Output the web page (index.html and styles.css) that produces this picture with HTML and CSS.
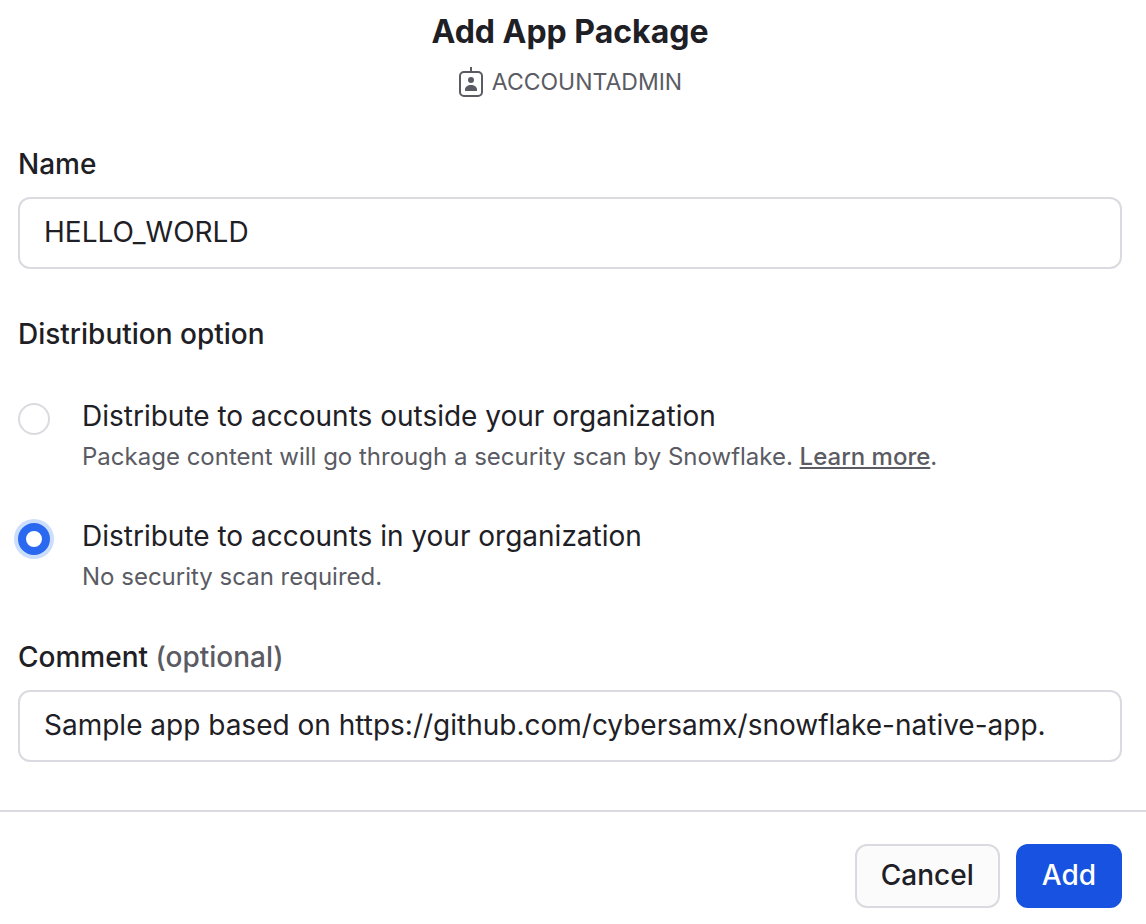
FILE: index.html
```
<!DOCTYPE html>
<html lang="en">
<head>
<meta charset="utf-8">
<meta name="viewport" content="width=device-width, initial-scale=1">
<title>Add App Package</title>
<link rel="stylesheet" href="styles.css">
</head>
<body>
<form class="dialog">
  <header class="dialog-header">
    <h1 class="title">Add App Package</h1>
    <p class="role">
      <svg class="role-icon" width="26" height="32" viewBox="0 0 26 32" fill="none" aria-hidden="true">
        <rect x="2" y="6" width="22" height="24" rx="4" stroke="#5a5b63" stroke-width="2"/>
        <path d="M13 1v5" stroke="#5a5b63" stroke-width="2"/>
        <circle cx="13" cy="14" r="3" fill="#5a5b63"/>
        <path d="M7 25v-1.500c0-2.700 2.700-4.500 6-4.500s6 1.800 6 4.500v1.500z" fill="#5a5b63"/>
      </svg>
      <span>ACCOUNTADMIN</span>
    </p>
  </header>
  <main class="fields">
    <div class="field">
      <label class="label" for="name">Name</label>
      <input class="text-input" id="name" type="text" value="HELLO_WORLD">
    </div>
    <fieldset class="options">
      <legend class="label">Distribution option</legend>
      <div class="option">
        <input class="radio" type="radio" name="distribution" id="outside">
        <div class="option-text">
          <label class="option-label" for="outside">Distribute to accounts outside your organization</label>
          <p class="hint">Package content will go through a security scan by Snowflake. <a class="link" href="#">Learn more</a>.</p>
        </div>
      </div>
      <div class="option">
        <input class="radio" type="radio" name="distribution" id="inside" checked>
        <div class="option-text">
          <label class="option-label" for="inside">Distribute to accounts in your organization</label>
          <p class="hint">No security scan required.</p>
        </div>
      </div>
    </fieldset>
    <div class="field">
      <label class="label" for="comment">Comment <span class="optional">(optional)</span></label>
      <input class="text-input" id="comment" type="text" value="Sample app based on https://github.com/cybersamx/snowflake-native-app.">
    </div>
  </main>
  <footer class="actions">
    <button class="button" type="button">Cancel</button>
    <button class="button primary" type="submit">Add</button>
  </footer>
</form>
</body>
</html>
```
FILE: styles.css
```
* {
  box-sizing: border-box;
}

body {
  margin: 0;
  background: #fff;
  color: #1e2025;
  font-family: Inter, "Liberation Sans", sans-serif;
  font-size: 28px;
  line-height: 36px;
}

h1,
p {
  margin: 0;
}

.dialog-header {
  display: flex;
  flex-direction: column;
  align-items: center;
  gap: 16px;
  padding: 14px 24px 0 18px;
}

.title {
  font-size: 32px;
  line-height: 36px;
  font-weight: 700;
}

.role {
  display: flex;
  align-items: center;
  gap: 8px;
  color: #5a5b63;
  font-size: 23px;
  line-height: 32px;
}

.fields {
  padding: 48px 24px 48px 18px;
}

.field {
  display: flex;
  flex-direction: column;
  gap: 15px;
}

.label {
  padding: 0;
  font-weight: 500;
}

.optional {
  color: #5a5b63;
}

.text-input {
  width: 100%;
  height: 72px;
  padding: 0 24px 2px;
  border: 2px solid #dadae0;
  border-radius: 12px;
  background: #fff;
  color: inherit;
  font: inherit;
}

.options {
  display: flex;
  flex-direction: column;
  gap: 43px;
  margin: 47px 0 44px;
  padding: 46px 0 0;
  border: 0;
}

.option {
  display: flex;
  gap: 32px;
}

.radio {
  appearance: none;
  flex: none;
  width: 32px;
  height: 32px;
  margin: 5px 0 0;
  border: 2px solid #dadae0;
  border-radius: 50%;
  background: #fff;
}

.radio:checked {
  border: 8px solid #2a68f0;
  box-shadow: 0 0 0 4px #cbdefc;
}

.option-label {
  display: block;
}

.hint {
  margin-top: 5px;
  color: #5a5b63;
  font-size: 24px;
}

.link {
  color: inherit;
  font-weight: 500;
}

.actions {
  display: flex;
  justify-content: flex-end;
  gap: 16px;
  padding: 32px 24px 16px;
  border-top: 2px solid #dadae0;
}

.button {
  height: 64px;
  padding: 0 24px 2px;
  border: 2px solid #dadae0;
  border-radius: 12px;
  background: #fbfbfb;
  color: inherit;
  font: inherit;
  font-weight: 500;
}

.primary {
  border-color: #1753e0;
  background: #1753e0;
  color: #fff;
}
```
